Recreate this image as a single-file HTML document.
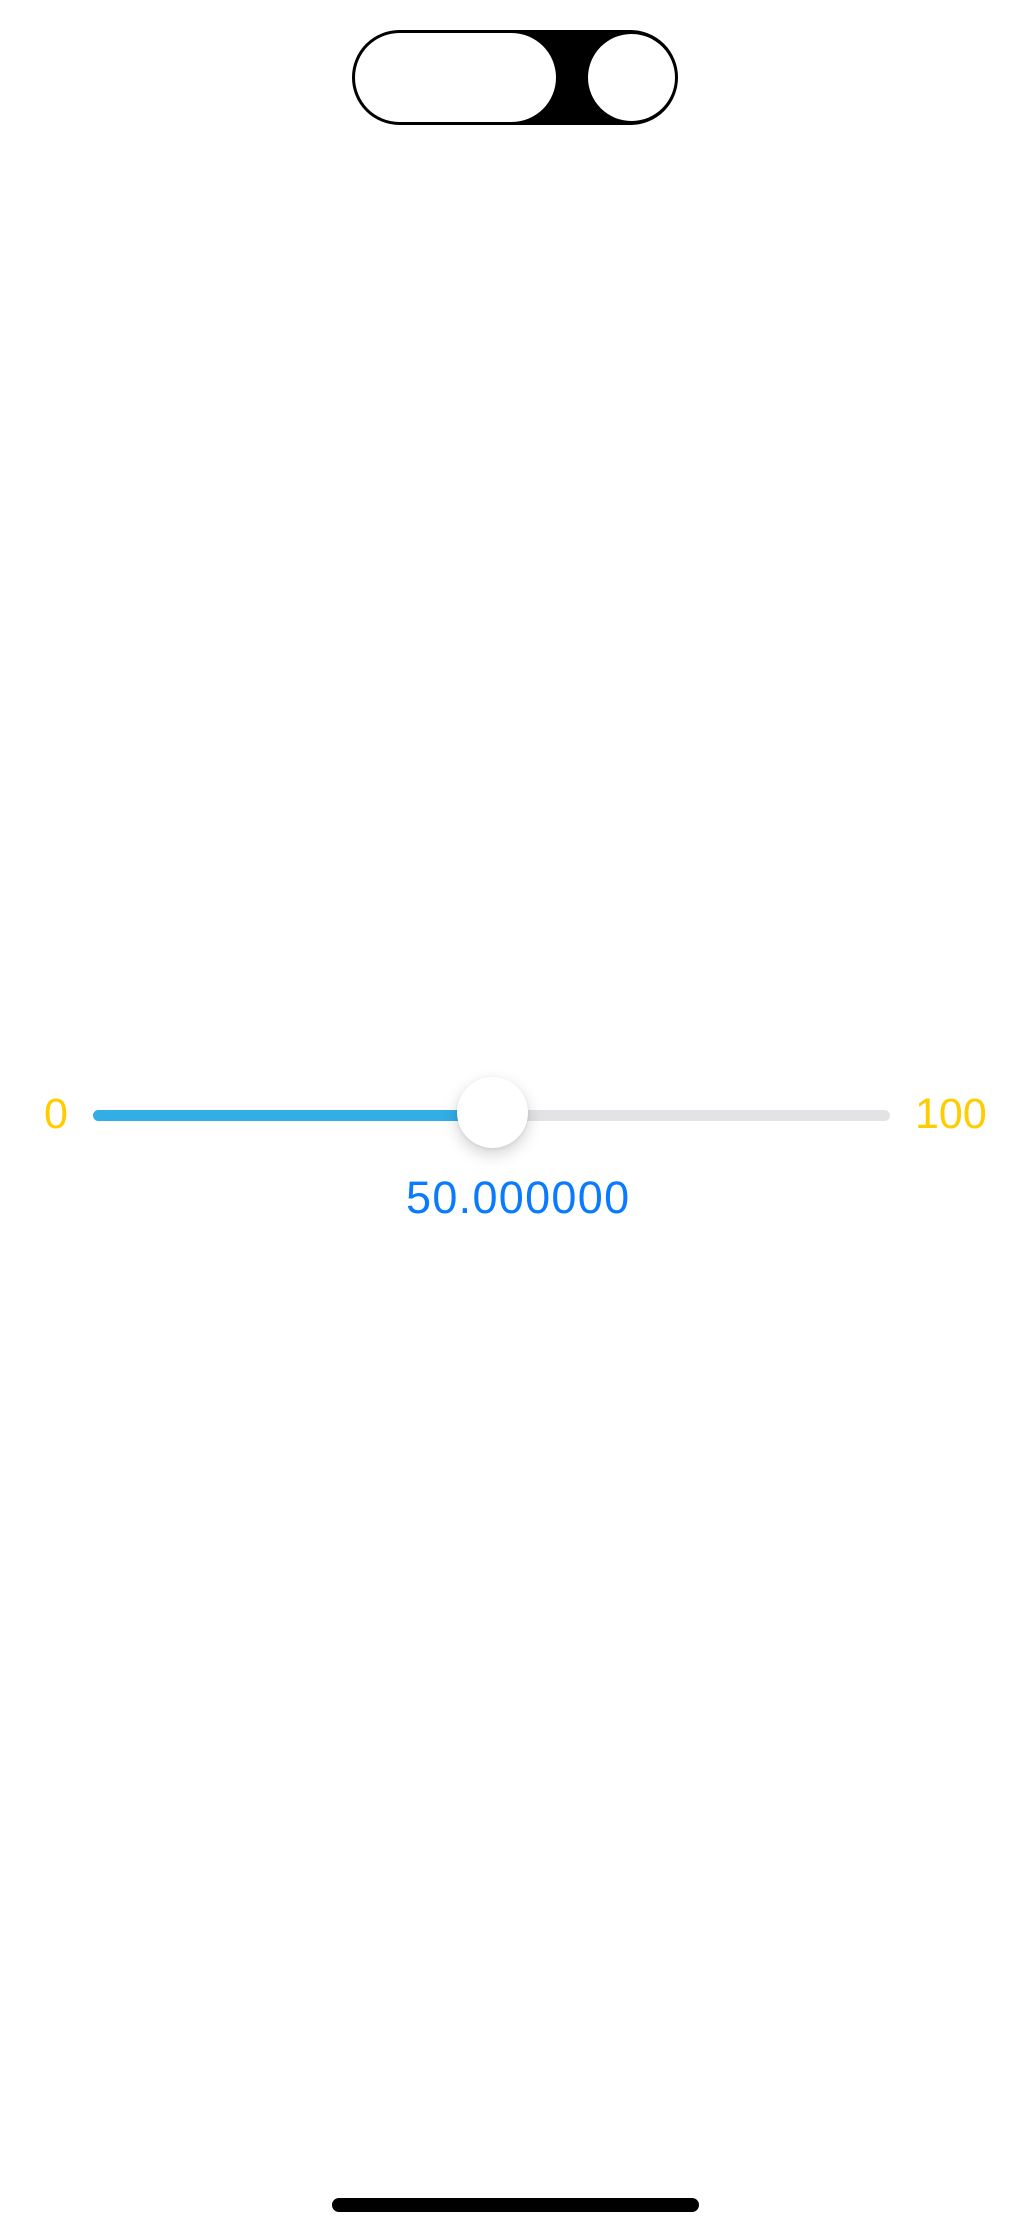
<!DOCTYPE html>
<html><head><style>
html,body{margin:0;padding:0;background:#fff;}
body{width:1030px;height:2233px;position:relative;overflow:hidden;font-family:"Liberation Sans",sans-serif;}
.abs{position:absolute;}
</style></head><body>
<div class="abs" style="left:352px;top:30px;width:320px;height:89px;border:3px solid #000;border-radius:48px;background:#000;"></div>
<div class="abs" style="left:355px;top:33px;width:201px;height:89px;border-radius:45px;background:#fff;"></div>
<div class="abs" style="left:588px;top:34px;width:87px;height:87px;border-radius:50%;background:#fff;"></div>

<div class="abs" style="left:93px;top:1110px;width:797px;height:11px;border-radius:6px;background:#e3e3e5;"></div>
<div class="abs" style="left:93px;top:1110px;width:400px;height:11px;border-radius:6px 0 0 6px;background:#32ade6;"></div>
<div class="abs" style="left:457px;top:1077px;width:71px;height:71px;border-radius:50%;background:#fff;box-shadow:0 6px 16px rgba(0,0,0,0.18),0 1px 3px rgba(0,0,0,0.08);"></div>

<div class="abs" style="left:44px;top:1093px;font-size:43px;line-height:43px;color:#ffcc00;">0</div>
<div class="abs" style="left:915px;top:1093px;font-size:43px;line-height:43px;color:#ffcc00;">100</div>
<div class="abs" style="left:406px;top:1175px;font-size:45px;line-height:45px;color:#0a7aff;letter-spacing:1.3px;">50.000000</div>

<div class="abs" style="left:332px;top:2198px;width:367px;height:14px;border-radius:7px;background:#000;"></div>
</body></html>
